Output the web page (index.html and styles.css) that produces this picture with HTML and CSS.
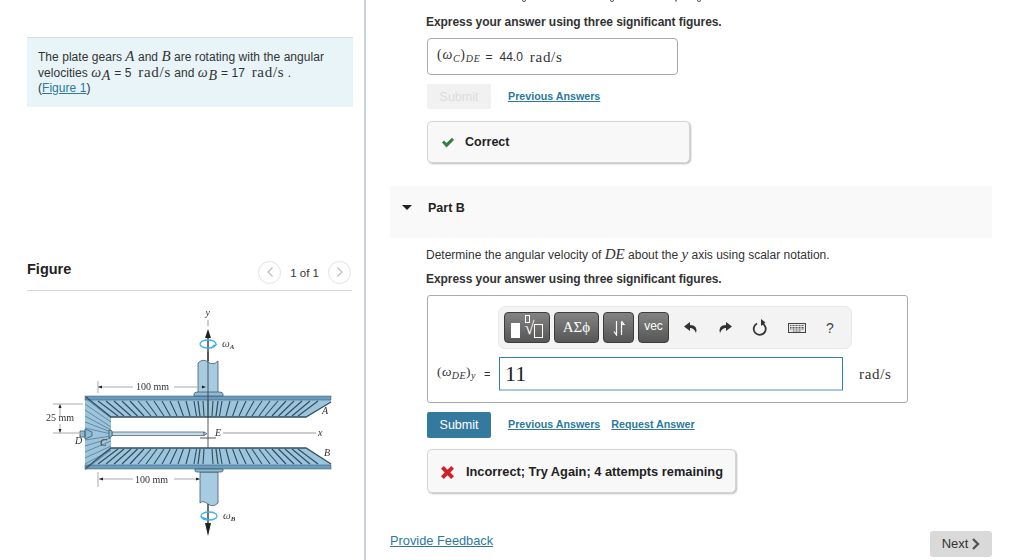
FILE: index.html
```html
<!DOCTYPE html>
<html lang="en">
<head>
<meta charset="utf-8">
<title>Part B</title>
<link rel="stylesheet" href="styles.css">
</head>
<body>
<div class="page">
  <aside class="left">
    <div class="intro">
      <p>The plate gears <i class="mi big">A</i> and <i class="mi big">B</i> are rotating with the angular<br>
      velocities <span class="m"><i>ω</i><sub><i>A</i></sub></span> = 5 &nbsp;<span class="m">rad/s</span> and <span class="m"><i>ω</i><sub><i>B</i></sub></span> = 17 &nbsp;<span class="m">rad/s</span> .<br>
      (<a href="#">Figure 1</a>)</p>
    </div>
    <div class="fig-head">
      <h2>Figure</h2>
      <div class="pager">
        <span class="circle"><svg width="8" height="12" viewBox="0 0 8 12"><path d="M6.5 1.5 2 6l4.500 4.500" class="chev"/></svg></span>
        <span class="count">1 of 1</span>
        <span class="circle"><svg width="8" height="12" viewBox="0 0 8 12"><path d="M1.500 1.500 6 6l-4.500 4.500" class="chev"/></svg></span>
      </div>
    </div>
    <svg class="figure" width="326" height="269" viewBox="27 291 326 269">
      <defs>
        <filter id="soft"><feGaussianBlur stdDeviation="0.35"/></filter>
        <path id="teeth" d="M5 0 4 15M14 0 11.500 15M22 0 18 15M30 0 24.600 15M38 0 31 15M46 0 37.700 15M54 0 44 15M62 0 51 15M70 0 57 15M78 0 64 15M86 0 70.500 15M94 0 77 15M102 0 84 15M110 0 90 15"/>
        <path id="fan" d="M0 0 26 20M0 6 26 24M0 12 26 29M0 18 26 32M0 24 26 34M0 30 26 36M0 42 26 38M0 48 26 40M0 54 26 43M0 60 26 48M0 66 26 52M0 72 26 52"/>
      </defs>
      <g filter="url(#soft)">
        <path class="metal" d="M85 396H331V402L306 417H111V448H306L331 464V469H85Z"/>
        <rect class="plate" x="85" y="396" width="246" height="4"/>
        <rect class="plate" x="85" y="465" width="246" height="4"/>
        <g class="tooth-lines">
          <use href="#teeth" transform="translate(208 401)"/>
          <use href="#teeth" transform="translate(208 401) scale(-1 1)"/>
          <use href="#teeth" transform="translate(208 464) scale(1 -1)"/>
          <use href="#teeth" transform="translate(208 464) scale(-1 -1)"/>
          <use href="#fan" class="fan" transform="translate(85 398)"/>
        </g>
        <path class="edge" d="M86 397 111 417H306L331 402M86 468 111 448H306L331 464"/>
        <path class="edge" d="M198 401 200 416M218 401 216 416M198 464 200 449M218 464 216 449"/>

        <path class="shaft" d="M198 393V363Q203 358 208 362T218 361V393Z"/>
        <path class="hub" d="M194 396V394Q194 392 198 392H219Q223 392 223 394V396Z"/>
        <path class="shaft" d="M200 472H218V503Q213 508 208 504T200 503Z"/>
        <path class="hub" d="M195 469H223V471Q223 472 220 472H198Q195 472 195 471Z"/>
        <path class="thin" d="M208 352V448M208 400V417M200 438H216"/>
        <path class="thick" d="M208 336V361M208 504V528"/>
        <path class="tip" d="M208 329 211 338H205ZM208 536 205 523H211Z"/>
        <path class="ax" d="M208 320V326M223 433H316"/>
        <ellipse class="ring" cx="208" cy="344" rx="8" ry="4"/>
        <ellipse class="ring" cx="209" cy="516" rx="8" ry="4"/>
        <path class="ring-tip" d="M218 344 211 349 213 345ZM204 520 200 516 209 519Z"/>
        <rect class="rod" x="112" y="432" width="92" height="3.500"/>
        <path class="rod" d="M204 432 207 433.700 204 435.500Z"/>
        <path class="hub" d="M80 431H85V437H80ZM85 429 92 432V436L85 439ZM109 430 112 431V436L109 438Z"/>
        <path class="dim" d="M98 381V393M98 387H133M174 387H205M99 479H133M98 472V487M174 479H201M53 404H83M53 433H83M60 405V416M60 424V432"/>
        <path class="tip" d="M60 404 61.500 408H58.500ZM60 433 58.500 429H61.500ZM98 387 102 385.500V388.500ZM206 387 202 385.500V388.500ZM99 479 103 477.500V480.500ZM200 479 196 477.500V480.500Z"/>
        <text class="fl" x="136" y="390">100 mm</text>
        <text class="fl" x="135" y="483">100 mm</text>
        <text class="fl" x="46" y="421">25 mm</text>
        <text class="fi" x="205.500" y="316">y</text>
        <text class="fi" x="215" y="436">E</text>
        <text class="fi" x="318" y="436">x</text>
        <text class="fi" x="75" y="444">D</text>
        <text class="fi" x="100" y="446">C</text>
        <text class="fi" x="322" y="414">A</text>
        <text class="fi" x="324" y="456">B</text>
        <text class="fw" x="222" y="347">ω<tspan class="fs" dy="2">A</tspan></text>
        <text class="fw" x="223" y="519">ω<tspan class="fs" dy="2">B</tspan></text>
      </g>
    </svg>
  </aside>

  <main class="right">
    <svg class="cut" width="300" height="3" viewBox="0 0 300 3"><path d="M96 .5q2 2 4 0M184 .5q2 2 4 0M249 .5q1 1.500 2 0M271 .5q2 2 4 0"/></svg>
    <div class="part">
      <p class="bold express-top">Express your answer using three significant figures.</p>
      <div class="answer-done"><span class="m lab">(<i>ω<sub>C</sub></i>)<sub><i>DE</i></sub></span><span class="val">=</span><span class="val">44.0</span><span class="m unit-done val">rad/s</span></div>
      <div class="actions first">
        <button class="btn off" type="button">Submit</button>
        <a class="act" href="#">Previous Answers</a>
      </div>
      <div class="msg ok">
        <svg width="14" height="11" viewBox="0 0 14 11"><path d="M1 5.500 3 3.500 5.500 6 11 .8 13 3 5.500 10.500Z"/></svg>
        <b>Correct</b>
      </div>
    </div>

    <div class="band"><span class="tri"></span><b>Part B</b></div>

    <div class="part">
      <p class="q">Determine the angular velocity of <i class="mi big">DE</i> about the <i class="mi big">y</i> axis using scalar notation.</p>
      <p class="bold express">Express your answer using three significant figures.</p>
      <div class="answer">
        <div class="toolbar">
          <span class="tool t1"><span class="wbox"></span><span class="root"><span class="mini"></span>√<span class="rbox"></span></span></span>
          <span class="tool t2">ΑΣϕ</span>
          <span class="tool t3"><svg width="12" height="16" viewBox="0 0 12 16"><path class="arr" d="M3.500 1V14M1 11.500 3.500 15 3.500 11.500M8.500 15V2M8.500 1 11 4.500H8.500"/></svg></span>
          <span class="tool t4">vec</span>
          <span class="icons">
            <svg width="14" height="12" viewBox="0 0 14 12"><path class="ic" d="M6 0 0 4.500 6 9V6Q10 6 12 11 14 3 6 3Z"/></svg>
            <svg width="14" height="12" viewBox="0 0 14 12"><path class="ic" d="M8 0 14 4.500 8 9V6Q4 6 2 11 0 3 8 3Z"/></svg>
            <svg width="16" height="17" viewBox="0 0 16 17"><path class="ico" d="M5 4.500A6 6 0 1 0 10 4.300"/><path class="ic" d="M9 0 13.500 3.500 9 7Z"/></svg>
            <svg width="18" height="10" viewBox="0 0 18 10"><rect class="kb" x=".5" y=".5" width="17" height="9"/><path class="kk" d="M2 2.500H16M2 4.500H16M2 6H16M5 8H13"/></svg>
            <span class="help">?</span>
          </span>
        </div>
        <div class="entry">
          <span class="m lab2">(<i>ω<sub>DE</sub></i>)<sub><i>y</i></sub></span><span class="eq">=</span>
          <span class="input">11</span>
          <span class="m unit">rad/s</span>
        </div>
      </div>
      <div class="actions second">
        <button class="btn on" type="button">Submit</button>
        <a class="act" href="#">Previous Answers</a>
        <a class="act req" href="#">Request Answer</a>
      </div>
      <div class="msg bad">
        <svg width="13" height="13" viewBox="0 0 13 13"><path d="M2.800 0 6.500 3.700 10.200 0 13 2.800 9.300 6.500 13 10.200 10.200 13 6.500 9.300 2.800 13 0 10.200 3.700 6.500 0 2.800Z"/></svg>
        <b>Incorrect; Try Again; 4 attempts remaining</b>
      </div>
    </div>

    <div class="foot">
      <a href="#">Provide Feedback</a>
      <span class="next">Next <svg width="9" height="12" viewBox="0 0 9 12"><path d="M2 1 7 6 2 11" class="nx"/></svg></span>
    </div>
  </main>
</div>
</body>
</html>
```
FILE: styles.css
```css
* { box-sizing: border-box; }
html, body { margin: 0; padding: 0; height: 560px; overflow: hidden; background: #fff; }
body { font: 12px/16px "Liberation Sans", Arial, sans-serif; color: #333; }
p { margin: 0; }
a { color: #2b7a9e; }
sub { font-size: 10px; line-height: 0; vertical-align: -3px; }
.page { display: flex; height: 560px; }
.m, .mi { font-family: "Liberation Serif", serif; line-height: 0; }
.m { font-size: 15px; letter-spacing: .7px; }
.big { font-size: 15px; }

.left { width: 366px; height: 560px; padding: 37px 11px 0 27px; border-right: 2px solid #c6d2dc; flex: none; }
.intro { height: 70px; padding: 12px 11px 0; background: #e8f4f8; border-top: 1px solid #d5e0e5; line-height: 15.500px; }
.intro p { white-space: nowrap; letter-spacing: .04px; }
.intro .m i { font-size: 14px; }
.intro sub i { font-size: 10px; }
.fig-head { display: flex; justify-content: space-between; align-items: center; height: 36px; margin: 148px 1px 0 0; border-bottom: 1px solid #d6dbe0; }
.fig-head h2 { margin: 0 0 7px; font-size: 14.500px; color: #222; }
.pager { display: flex; align-items: center; gap: 9px; margin: 0 1px 1px 0; }
.circle { display: flex; align-items: center; justify-content: center; width: 23px; height: 23px; border: 1px solid #dfe2e5; border-radius: 50%; }
.chev { fill: none; stroke: #bbb; stroke-width: 1.200; }
.count { padding-top: 2px; font-size: 11.500px; color: #333; }

.figure { display: block; }
.metal { fill: #9cc5dd; }
.plate { fill: #6b9dbc; stroke: #35566b; stroke-width: .5; }
.tooth-lines { fill: none; stroke: #2f4c5f; stroke-width: 1.100; }
.fan { stroke: #54788f; stroke-width: .8; }
.edge { fill: none; stroke: #34505f; stroke-width: 1.300; }
.shaft { fill: #a7cbe0; stroke: #3e5b6e; stroke-width: .8; }
.hub { fill: #8fbbd6; stroke: #3e5b6e; stroke-width: .8; }
.thin { fill: none; stroke: #333; stroke-width: .8; }
.thick { fill: none; stroke: #333; stroke-width: 1.400; }
.tip { fill: #222; }
.ax { fill: none; stroke: #999; stroke-width: 1; }
.ring { fill: none; stroke: #3fb0e6; stroke-width: 1.300; }
.ring-tip { fill: #3fb0e6; }
.rod { fill: #c6dbe8; stroke: #3e5b6e; stroke-width: .7; }
.dim { fill: none; stroke: #aaa; stroke-width: 1; }
.fl { font: 10px "Liberation Serif", serif; fill: #333; }
.fi { font: italic 10px "Liberation Serif", serif; fill: #333; }
.fw { font: italic 11px "Liberation Serif", serif; fill: #444; }
.fs { font-size: 7px; font-weight: bold; }

.right { flex: 1; min-width: 0; height: 560px; padding-left: 24px; }
.cut { display: block; margin-left: 36px; margin-bottom: 10px; }
.cut path { fill: none; stroke: #444; stroke-width: 1; }
.part { width: 602px; padding-left: 37px; }
.bold { font-weight: bold; color: #333; letter-spacing: -.06px; }
.express-top { height: 16px; margin-left: -1px; padding-top: 1px; }
.answer-done { display: flex; align-items: center; white-space: pre; width: 251px; height: 37px; margin-top: 9px; padding-left: 9px; border: 1px solid #aaa; border-radius: 4px; font-size: 12px; }
.lab { font-size: 14px; }
.unit-done { font-size: 15px; }
.val { margin-left: 5px; }
.val + .val { margin-left: 7px; }
.actions { display: flex; align-items: center; }
.actions.first { margin-top: 9px; }
.actions.second { margin-top: 9px; }
.btn { width: 64px; height: 26px; padding: 0; border: 0; border-radius: 2px; font: 12.500px "Liberation Sans", Arial, sans-serif; }
.btn.off { height: 25px; background: #f1f1f1; color: #dcdcdc; }
.btn.on { background: #34799e; color: #fff; }
.act { margin: 0 0 2px 17px; font-size: 10.700px; font-weight: bold; }
.req { margin-left: 11px; }
.msg { display: flex; align-items: center; background: #f8f8f8; border: 1px solid #d5d5d5; border-radius: 5px; box-shadow: 1px 1px 2px #bbb; color: #222; padding-left: 13px; }
.ok { width: 263px; height: 42px; margin-top: 12px; gap: 10px; font-size: 12.500px; }
.ok svg { fill: #34803f; }
.bad { width: 309px; height: 44px; margin-top: 11px; padding-top: 2px; gap: 12px; font-size: 12.800px; }
.bad svg { fill: #cc2229; }

.band { display: flex; align-items: center; width: 602px; height: 52px; margin-top: 23px; padding: 0 0 9px 12px; background: #f9f9f9; color: #222; font-size: 12.500px; }
.tri { width: 0; height: 0; margin-right: 16px; border: 5px solid transparent; border-top: 5px solid #222; border-bottom: 0; }
.q { margin: 9px 0 0 -1px; }
.express { margin: 8px 0 0 -1px; }
.answer { width: 481px; height: 108px; margin-top: 8px; padding: 10px 0 0 70px; border: 1px solid #aaa; border-radius: 3px; }
.toolbar { display: flex; align-items: center; width: 354px; height: 43px; padding-left: 5px; background: #f3f3f3; border: 1px solid #e8e8e8; border-radius: 7px; }
.tool { display: flex; align-items: center; justify-content: center; height: 31px; margin-right: 4px; border: 1px solid #3c3c3c; border-radius: 4px; background: linear-gradient(#838383, #565656); color: #fff; }
.t1 { width: 46px; gap: 5px; }
.t2 { width: 45px; font: 15px "Liberation Serif", serif; }
.t3 { width: 31px; }
.arr { fill: none; stroke: #fff; stroke-width: 1.200; }
.t4 { width: 31px; font-size: 12px; padding-bottom: 3px; }
.wbox { width: 9px; height: 15px; margin-top: 5px; background: #fff; }
.root { display: flex; align-items: flex-end; position: relative; font: 18px/20px "Liberation Serif", serif; }
.mini { position: absolute; top: -3px; left: 0; width: 5px; height: 8px; border: 1px solid #fff; }
.rbox { width: 9px; height: 14px; border: 1px solid #fff; }
.icons { display: flex; align-items: center; margin-left: 11px; gap: 20px; }
.ic { fill: #333; }
.ico { fill: none; stroke: #333; stroke-width: 1.800; }
.kb { fill: #e8e8e8; stroke: #444; }
.kk { fill: none; stroke: #555; stroke-width: 1; stroke-dasharray: 1 .5; }
.help { font-size: 14px; color: #444; }
.entry { display: flex; align-items: center; height: 34px; margin: 8px 0 0 -61px; }
.lab2 { flex: none; width: 47px; font-size: 13.500px; letter-spacing: .4px; white-space: nowrap; }
.eq { flex: none; width: 8px; font-size: 11px; }
.input { flex: none; width: 344px; height: 34px; margin-left: 7px; padding-left: 5px; border: 1px solid #2f7ea4; border-bottom: 2px solid #a8cbd8; font: 22px/32px "Liberation Serif", serif; color: #222; }
.unit { flex: none; margin-left: 16px; }

.foot { display: flex; justify-content: space-between; align-items: flex-end; width: 602px; margin-top: 38px; font-size: 13px; }
.foot a { margin-bottom: 8px; font-size: 12.800px; }
.next { display: flex; align-items: center; justify-content: center; gap: 3px; width: 62px; height: 26px; background: #d9d9d9; border-radius: 3px; color: #333; }
.nx { fill: none; stroke: #555; stroke-width: 2.400; }
```
